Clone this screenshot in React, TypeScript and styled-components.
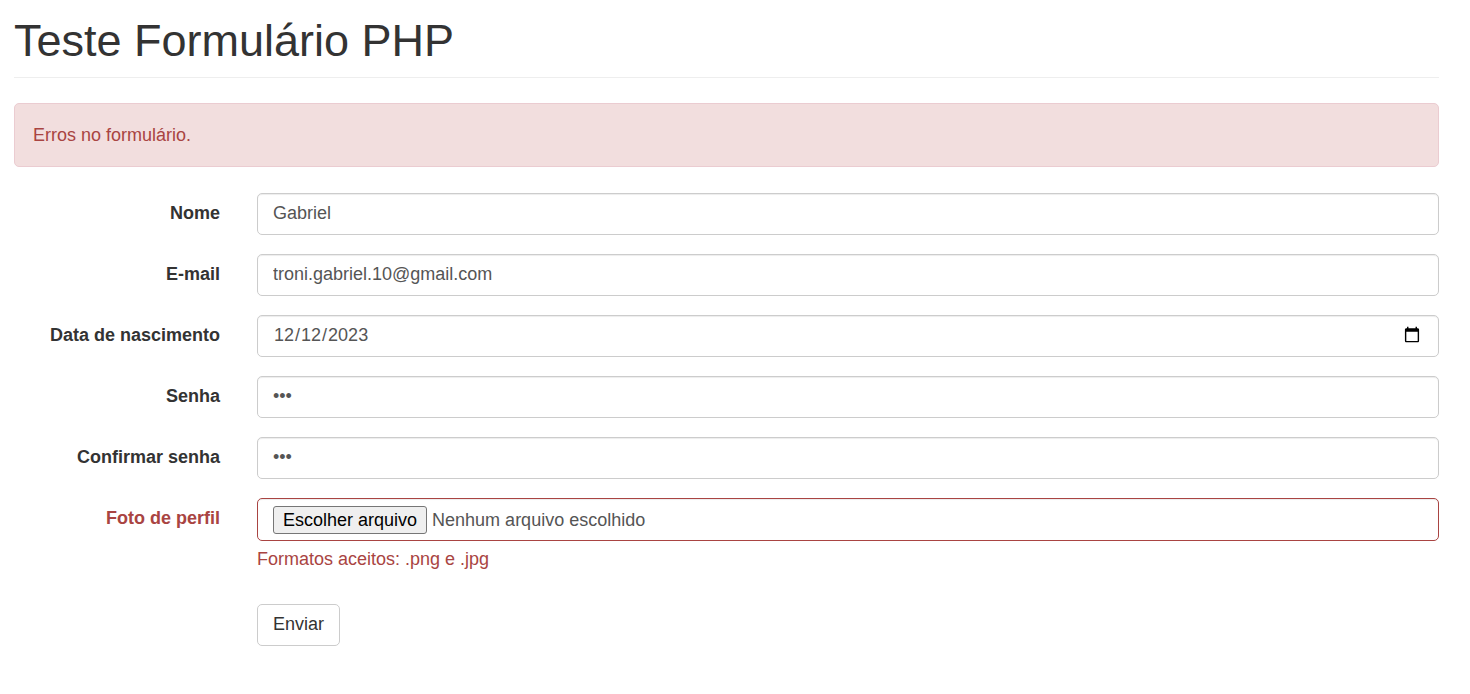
import React, { useState } from 'react';
import styled, { createGlobalStyle, css } from 'styled-components';

const danger = '#a94442';

const GlobalStyle = createGlobalStyle`
  *, *::before, *::after {
    box-sizing: border-box;
  }
  body {
    margin: 0;
    background: #fff;
    color: #333;
    font-family: "Liberation Sans", Arial, sans-serif;
    font-size: 18px;
    line-height: 24px;
  }
`;

const Page = styled.main`
  padding: 16px 31px 24px 14px;
`;

const PageHeader = styled.header`
  margin-bottom: 25px;
  padding-bottom: 11px;
  border-bottom: 1px solid #eee;
`;

const Title = styled.h1`
  margin: 0;
  font-size: 45px;
  font-weight: 500;
  line-height: 50px;
`;

const Alert = styled.div`
  margin-bottom: 26px;
  padding: 19px 18px;
  border: 1px solid #ebccd1;
  border-radius: 5px;
  background: #f2dede;
  color: ${danger};
`;

const Form = styled.form`
  display: flex;
  flex-direction: column;
  gap: 19px;
`;

const FormGroup = styled.div`
  display: grid;
  grid-template-columns: 206px minmax(0, 1fr);
  column-gap: 37px;
  align-items: start;
`;

const Label = styled.label<{ $error?: boolean }>`
  padding-top: 8px;
  color: ${(p) => (p.$error ? danger : 'inherit')};
  font-weight: 700;
  text-align: right;
`;

const Field = styled.div`
  grid-column: 2;
`;

const controlBox = css`
  width: 100%;
  height: 42px;
  border: 1px solid #ccc;
  border-radius: 5px;
  background: #fff;
  box-shadow: inset 0 1px 1px rgba(0, 0, 0, 0.075);
  color: #555;
`;

const Input = styled.input`
  ${controlBox}
  display: block;
  margin: 0;
  padding: 6px 15px 8px;
  font-family: inherit;
  font-size: 18px;
  line-height: 24px;

  &:focus {
    border-color: #66afe9;
    outline: 0;
  }
`;

const FileControl = styled.label`
  ${controlBox}
  display: flex;
  align-items: center;
  gap: 5px;
  height: 43px;
  padding: 0 15px;
  border-color: ${danger};
`;

const HiddenFileInput = styled.input`
  position: absolute;
  width: 1px;
  height: 1px;
  margin: 0;
  opacity: 0;
`;

const FileButton = styled.span`
  height: 28px;
  padding: 0 9px;
  border: 1px solid #767676;
  border-radius: 3px;
  background: #efefef;
  color: #000;
  line-height: 26px;
`;

const HelpText = styled.p`
  margin: 6px 0 13px;
  color: ${danger};
`;

const SubmitButton = styled.button`
  display: block;
  height: 42px;
  margin: 1px 0 0;
  padding: 0 15px 2px;
  border: 1px solid #ccc;
  border-radius: 5px;
  background: #fff;
  color: #333;
  font-family: inherit;
  font-size: 18px;
  line-height: 24px;
  cursor: pointer;
`;

const fields = [
  { id: 'nome', label: 'Nome', type: 'text', value: 'Gabriel' },
  { id: 'email', label: 'E-mail', type: 'email', value: 'troni.gabriel.10@gmail.com' },
  { id: 'nascimento', label: 'Data de nascimento', type: 'date', value: '2023-12-12' },
  { id: 'senha', label: 'Senha', type: 'password', value: '123' },
  { id: 'confirmar', label: 'Confirmar senha', type: 'password', value: '123' },
];

export default function App() {
  const [fileName, setFileName] = useState('Nenhum arquivo escolhido');

  return (
    <>
      <GlobalStyle />
      <Page>
        <PageHeader>
          <Title>Teste Formulário PHP</Title>
        </PageHeader>
        <Alert role="alert">Erros no formulário.</Alert>
        <Form onSubmit={(e) => e.preventDefault()}>
          {fields.map((f) => (
            <FormGroup key={f.id}>
              <Label htmlFor={f.id}>{f.label}</Label>
              <Field>
                <Input id={f.id} name={f.id} type={f.type} defaultValue={f.value} />
              </Field>
            </FormGroup>
          ))}
          <FormGroup>
            <Label htmlFor="foto" $error>
              Foto de perfil
            </Label>
            <Field>
              <FileControl>
                <HiddenFileInput
                  id="foto"
                  name="foto"
                  type="file"
                  accept=".png,.jpg"
                  onChange={(e) =>
                    setFileName(e.target.files?.[0]?.name ?? 'Nenhum arquivo escolhido')
                  }
                />
                <FileButton>Escolher arquivo</FileButton>
                <span>{fileName}</span>
              </FileControl>
              <HelpText>Formatos aceitos: .png e .jpg</HelpText>
            </Field>
          </FormGroup>
          <FormGroup>
            <Field>
              <SubmitButton type="submit">Enviar</SubmitButton>
            </Field>
          </FormGroup>
        </Form>
      </Page>
    </>
  );
}
